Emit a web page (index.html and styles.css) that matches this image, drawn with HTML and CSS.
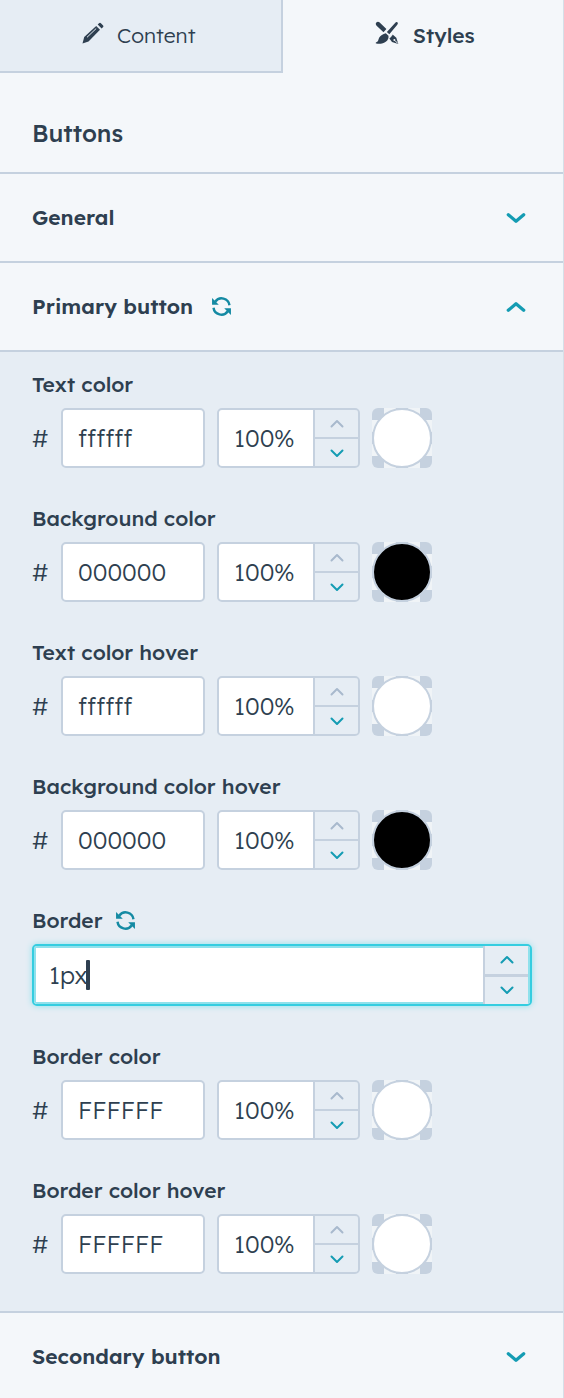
FILE: index.html
```html
<!DOCTYPE html>
<html lang="en">
  <head>
    <meta charset="UTF-8" />
    <meta name="viewport" content="width=device-width, initial-scale=1.0" />
    <title>Buttons</title>
    <link rel="stylesheet" href="styles.css">
  </head>
  <body>
    <!-- Shared icons -->
    <svg class="icon-defs" width="0" height="0" aria-hidden="true">
      <symbol id="chevron-up" viewBox="0 0 20 12">
        <path d="M3 9l7-6 7 6" />
      </symbol>
      <symbol id="chevron-down" viewBox="0 0 20 12">
        <path d="M3 3l7 6 7-6" />
      </symbol>
      <symbol id="step-up" viewBox="0 0 14 10">
        <path d="M1.500 7.500L7 2l5.500 5.500" />
      </symbol>
      <symbol id="step-down" viewBox="0 0 14 10">
        <path d="M1.500 2.500L7 8l5.500-5.500" />
      </symbol>
      <symbol id="refresh" viewBox="0 0 20 20">
        <path d="M4 5.500A7.500 7.500 0 0 1 17.600 8.800M16 14.500A7.500 7.500 0 0 1 2.400 11.200" fill="none" stroke="currentColor" stroke-width="2.300" />
        <path d="M1 2v6.400h6.400zM19 18v-6.400h-6.400z" fill="currentColor" />
      </symbol>
    </svg>

    <div class="sidebar">
      <!-- Tabs -->
      <nav class="tabs">
        <a href="#content" class="tab">
          <svg class="tab-icon" viewBox="0 0 24 24" aria-hidden="true">
            <path d="M1.500 22.500l1.700-6.500L15.200 5l3.800 3.700L7.500 20.400z" fill="currentColor" />
            <path d="M6 16.300l9.200-8.800" stroke="#e5edf4" stroke-width="1" />
            <path d="M16.700 3.600l1.600-1.500q.8-.7 1.600.1l2.200 2.300q.8.800 0 1.600l-1.500 1.500z" fill="currentColor" />
          </svg>
          Content
        </a>
        <a href="#styles" class="tab active">
          <svg class="tab-icon" viewBox="0 0 24 24" aria-hidden="true">
            <path d="M1.300 1.400q1.700-1.500 3.400.1l6.700 6.500-2.900 3.200-6.900-6.500q-1.500-1.700-.3-3.300z" fill="currentColor" />
            <path d="M22.400 1.300q1.100 1-.1 2.400L14.300 13.300l-2.400-2.200 8.200-9.200q1.200-1.400 2.300-.6z" fill="currentColor" />
            <path d="M10.800 12.200l2.700 2.500c.7 5.400-5 8.900-12.200 7.900-.9-.3-.7-1 .1-1.300 2.200-.8 1.700-2.400 2.700-4.500 1.300-2.700 3.800-3.600 6.700-4.600z" fill="currentColor" />
            <path d="M17.600 13.600l3.700 3.200 2 6.100-6.300-1.900-2.600-3.400z" fill="currentColor" />
            <path d="M14.700 16.600l2.800-2.700M22.900 22.500l-3-3" stroke="#f4f7fa" stroke-width="1" />
            <circle cx="19.400" cy="19" r="1" fill="#f4f7fa" />
          </svg>
          Styles
        </a>
      </nav>

      <h1>Buttons</h1>

      <!-- General -->
      <h2 class="section">
        <button class="section-toggle" aria-expanded="false">General</button>
        <svg class="chevron"><use href="#chevron-down" /></svg>
      </h2>

      <!-- Primary button -->
      <h2 class="section">
        <button class="section-toggle" aria-expanded="true">Primary button</button>
        <button class="reset" aria-label="Reset primary button"><svg><use href="#refresh" /></svg></button>
        <svg class="chevron"><use href="#chevron-up" /></svg>
      </h2>

      <div class="panel">
        <div class="field">
          <label for="text-color">Text color</label>
          <div class="color-row">
            <span class="hash">#</span>
            <input class="hex" id="text-color" type="text" value="ffffff" />
            <div class="stepper">
              <input type="text" value="100%" aria-label="Text color opacity" />
              <div class="step-buttons">
                <button disabled aria-label="Increase"><svg><use href="#step-up" /></svg></button>
                <button aria-label="Decrease"><svg><use href="#step-down" /></svg></button>
              </div>
            </div>
            <button class="swatch" aria-label="Pick text color"></button>
          </div>
        </div>

        <div class="field">
          <label for="bg-color">Background color</label>
          <div class="color-row">
            <span class="hash">#</span>
            <input class="hex" id="bg-color" type="text" value="000000" />
            <div class="stepper">
              <input type="text" value="100%" aria-label="Background color opacity" />
              <div class="step-buttons">
                <button disabled aria-label="Increase"><svg><use href="#step-up" /></svg></button>
                <button aria-label="Decrease"><svg><use href="#step-down" /></svg></button>
              </div>
            </div>
            <button class="swatch black" aria-label="Pick background color"></button>
          </div>
        </div>

        <div class="field">
          <label for="text-hover">Text color hover</label>
          <div class="color-row">
            <span class="hash">#</span>
            <input class="hex" id="text-hover" type="text" value="ffffff" />
            <div class="stepper">
              <input type="text" value="100%" aria-label="Text color hover opacity" />
              <div class="step-buttons">
                <button disabled aria-label="Increase"><svg><use href="#step-up" /></svg></button>
                <button aria-label="Decrease"><svg><use href="#step-down" /></svg></button>
              </div>
            </div>
            <button class="swatch" aria-label="Pick text color hover"></button>
          </div>
        </div>

        <div class="field">
          <label for="bg-hover">Background color hover</label>
          <div class="color-row">
            <span class="hash">#</span>
            <input class="hex" id="bg-hover" type="text" value="000000" />
            <div class="stepper">
              <input type="text" value="100%" aria-label="Background color hover opacity" />
              <div class="step-buttons">
                <button disabled aria-label="Increase"><svg><use href="#step-up" /></svg></button>
                <button aria-label="Decrease"><svg><use href="#step-down" /></svg></button>
              </div>
            </div>
            <button class="swatch black" aria-label="Pick background color hover"></button>
          </div>
        </div>

        <div class="field">
          <div class="label-row">
            <label for="border">Border</label>
            <button class="reset" aria-label="Reset border"><svg><use href="#refresh" /></svg></button>
          </div>
          <div class="stepper focused">
            <input id="border" type="text" value="1px" />
            <span class="caret"></span>
            <div class="step-buttons">
              <button aria-label="Increase"><svg><use href="#step-up" /></svg></button>
              <button aria-label="Decrease"><svg><use href="#step-down" /></svg></button>
            </div>
          </div>
        </div>

        <div class="field">
          <label for="border-color">Border color</label>
          <div class="color-row">
            <span class="hash">#</span>
            <input class="hex" id="border-color" type="text" value="FFFFFF" />
            <div class="stepper">
              <input type="text" value="100%" aria-label="Border color opacity" />
              <div class="step-buttons">
                <button disabled aria-label="Increase"><svg><use href="#step-up" /></svg></button>
                <button aria-label="Decrease"><svg><use href="#step-down" /></svg></button>
              </div>
            </div>
            <button class="swatch" aria-label="Pick border color"></button>
          </div>
        </div>

        <div class="field">
          <label for="border-hover">Border color hover</label>
          <div class="color-row">
            <span class="hash">#</span>
            <input class="hex" id="border-hover" type="text" value="FFFFFF" />
            <div class="stepper">
              <input type="text" value="100%" aria-label="Border color hover opacity" />
              <div class="step-buttons">
                <button disabled aria-label="Increase"><svg><use href="#step-up" /></svg></button>
                <button aria-label="Decrease"><svg><use href="#step-down" /></svg></button>
              </div>
            </div>
            <button class="swatch" aria-label="Pick border color hover"></button>
          </div>
        </div>
      </div>

      <!-- Secondary button -->
      <h2 class="section last">
        <button class="section-toggle" aria-expanded="false">Secondary button</button>
        <svg class="chevron"><use href="#chevron-down" /></svg>
      </h2>
    </div>
  </body>
</html>
```
FILE: styles.css
```css
*,
*::before {
  margin: 0;
  padding: 0;
  box-sizing: border-box;
}
body {
  font-family: "Lexend Deca", "Inter", sans-serif;
  color: #2e3f50;
  background-color: #f4f7fa;
}
button,
input {
  font: inherit;
  color: inherit;
  border: 0;
  outline: none;
  background: none;
}
button {
  cursor: pointer;
}
.icon-defs {
  display: block;
}
.sidebar {
  border-right: 1px solid #d6dfe8;
}

.tabs {
  display: flex;
}
.tab {
  flex: 1;
  height: 73px;
  padding: 0 4px 2px 0;
  display: flex;
  justify-content: center;
  align-items: center;
  gap: 12px;
  border-right: 2px solid #c5d1df;
  border-bottom: 2px solid #c5d1df;
  background-color: #e6edf4;
  color: inherit;
  font-size: 21px;
  font-weight: 300;
  text-decoration: none;
}
.tab.active {
  padding: 0 0 2px 4px;
  gap: 14px;
  border-right: 0;
  border-color: transparent;
  background-color: transparent;
  font-weight: 500;
}
.tab-icon {
  width: 24px;
  height: 24px;
  margin-bottom: 4px;
}

h1 {
  height: 101px;
  padding: 20px 32px 0;
  border-bottom: 2px solid #c5d1df;
  font-size: 24px;
  font-weight: 500;
  line-height: 80px;
}
.section {
  height: 89px;
  padding: 0 36px 0 32px;
  display: flex;
  align-items: center;
  gap: 18px;
  border-bottom: 2px solid #c5d1df;
  font-size: 21px;
  font-weight: 600;
}
.section.last {
  height: 87px;
  border: 0;
}
.section-toggle {
  padding-bottom: 2px;
}
.chevron {
  width: 22px;
  height: 14px;
  margin-left: auto;
  fill: none;
  stroke: #149cb3;
  stroke-width: 3;
  stroke-linecap: round;
  stroke-linejoin: round;
}
.reset,
.reset svg {
  display: block;
  width: 21px;
  height: 21px;
  color: #148aa3;
}

.panel {
  padding: 18px 31px 37px 32px;
  display: flex;
  flex-direction: column;
  gap: 36px;
  border-bottom: 2px solid #c5d1df;
  background-color: #e6edf4;
}
.field {
  display: flex;
  flex-direction: column;
  gap: 10px;
}
.field label {
  font-size: 21px;
  font-weight: 500;
  line-height: 28px;
}
.label-row {
  display: flex;
  align-items: center;
  gap: 12px;
}
.color-row {
  display: flex;
  align-items: center;
  gap: 12px;
  font-size: 24px;
  font-weight: 300;
}
.hash {
  width: 17px;
}
.hex {
  width: 144px;
  height: 60px;
  padding: 0 15px;
  border: 2px solid #c5d1df;
  border-radius: 5px;
  background-color: #fff;
}

.stepper {
  width: 143px;
  height: 60px;
  display: flex;
  border: 2px solid #c5d1df;
  border-radius: 5px;
  background-color: #fff;
  overflow: hidden;
  font-size: 24px;
  font-weight: 300;
}
.stepper input {
  flex: 1;
  min-width: 0;
  padding-left: 15px;
}
.step-buttons {
  width: 45px;
  display: flex;
  flex-direction: column;
  gap: 2px;
  border-left: 2px solid #c5d1df;
  background-color: #c5d1df;
}
.step-buttons button {
  flex: 1;
  display: flex;
  justify-content: center;
  align-items: center;
  background-color: #e6edf4;
}
.step-buttons svg {
  width: 14px;
  height: 10px;
  fill: none;
  stroke: #149cb3;
  stroke-width: 2;
  stroke-linecap: round;
  stroke-linejoin: round;
}
.step-buttons button:disabled svg {
  stroke: #a8b9cd;
}

.stepper.focused {
  position: relative;
  width: 100%;
  height: 62px;
  border-color: #35cde0;
  box-shadow: 0 0 6px #8fe1ec;
}
.focused input {
  box-shadow: inset 0 2px #8fe1ec, inset 2px -2px #8fe1ec;
}
.focused .step-buttons {
  width: 47px;
  gap: 3px;
  border-right: 2px solid #8fe1ec;
}
.caret {
  position: absolute;
  top: 14px;
  left: 52px;
  width: 4px;
  height: 30px;
  border-radius: 1px;
  background-color: #2e3f50;
}

.swatch {
  width: 60px;
  height: 60px;
  border-radius: 6px;
  background: conic-gradient(#f0f4f7 25%, #c5d1df 0 50%, #f0f4f7 0 75%, #c5d1df 0) 0 0 / 24px 24px;
}
.swatch::before {
  content: "";
  display: block;
  height: 60px;
  border: 2px solid #c5d1df;
  border-radius: 50%;
  background-color: #fff;
}
.swatch.black::before {
  background-color: #000;
}
```
